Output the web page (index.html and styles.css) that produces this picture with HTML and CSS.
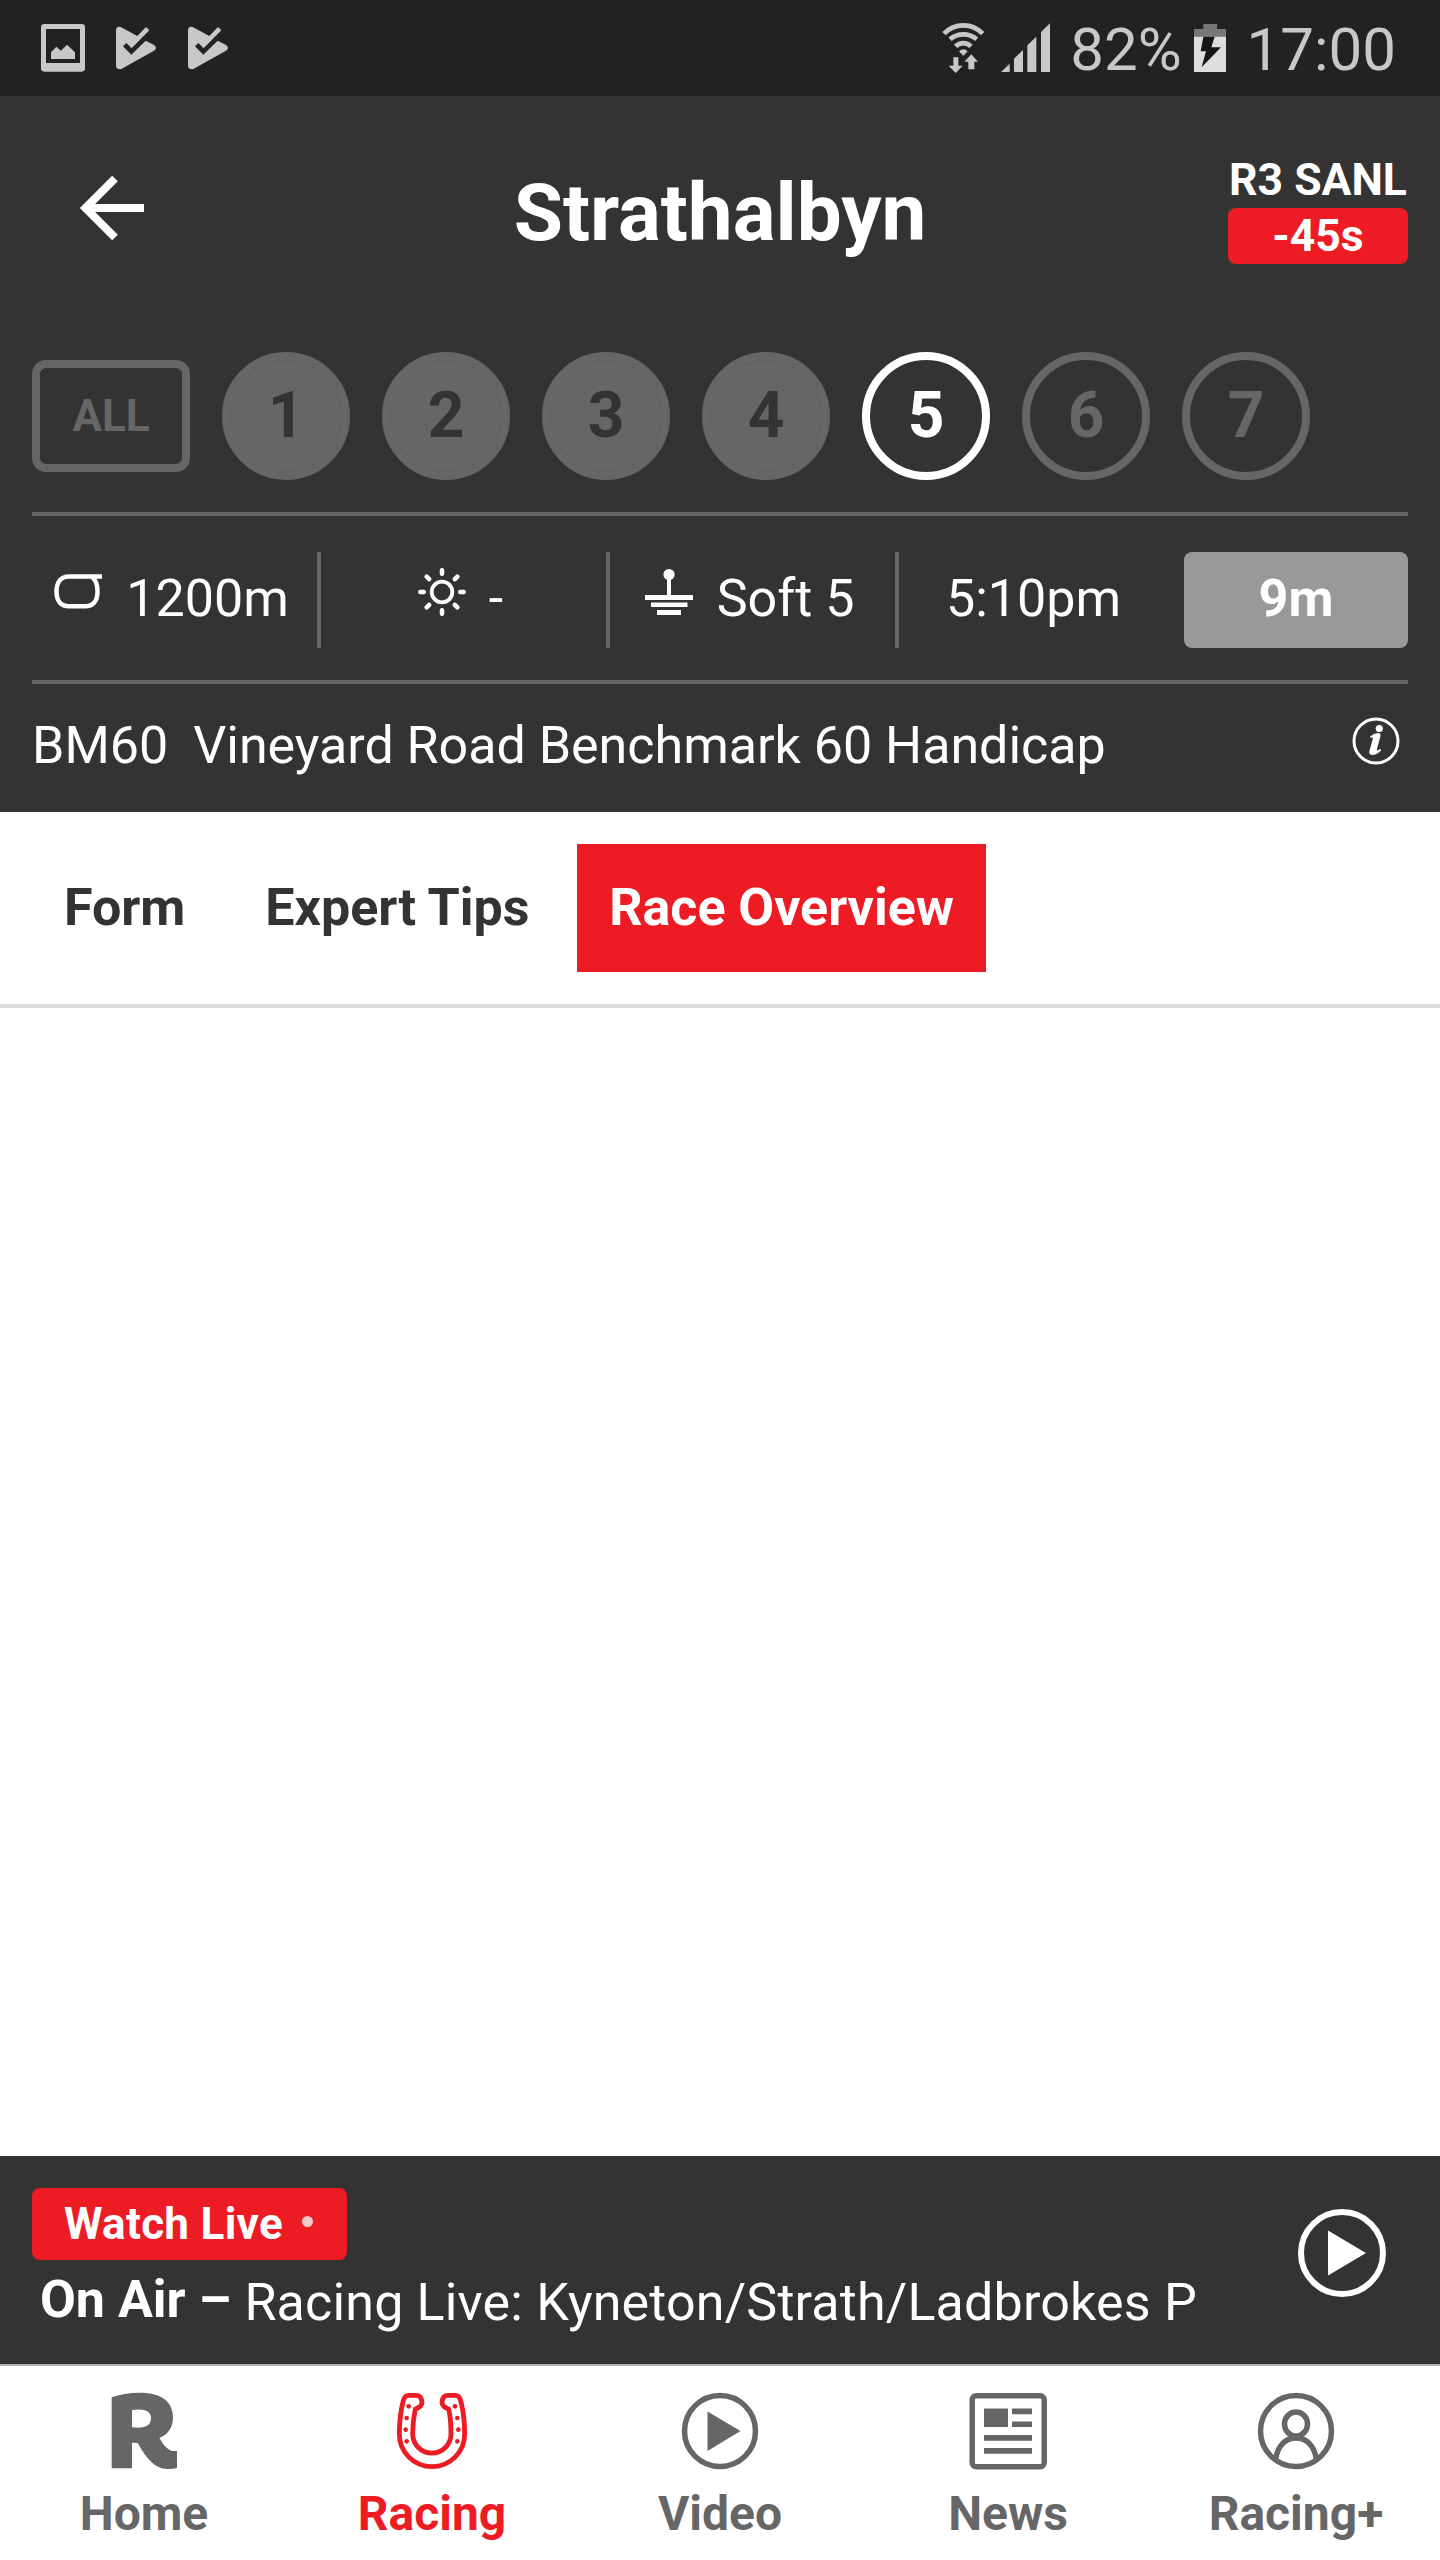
FILE: index.html
```html
<!DOCTYPE html>
<html lang="en">
<head>
<meta charset="utf-8">
<title>Strathalbyn</title>
<link rel="stylesheet" href="styles.css">
</head>
<body>
<div class="screen">
  <div class="status">
    <div class="status-left">
      <svg width="44" height="96" viewBox="123 0 132 288" fill="#c8c8c8"><path fill-rule="evenodd" d="M133 72H245Q255 72 255 82V205Q255 215 245 215H133Q123 215 123 205V82Q123 72 133 72ZM138 87V189H240V87Z"/><path d="M153 157L169 140L183 152L201 134L225 157V177H153Z"/></svg>
      <svg width="40" height="96" viewBox="348 0 120 288" fill="#c8c8c8"><path d="M348 90Q350 77 362 81L412 108L438 81L448 91L395 145L379 129L369 139L394 164L437 122L462 135Q474 144 462 152L364 207Q350 210 348 198Z"/></svg>
      <svg width="40" height="96" viewBox="348 0 120 288" fill="#c8c8c8"><path d="M348 90Q350 77 362 81L412 108L438 81L448 91L395 145L379 129L369 139L394 164L437 122L462 135Q474 144 462 152L364 207Q350 210 348 198Z"/></svg>
    </div>
    <div class="status-right">
      <svg width="112" height="80" viewBox="0 -6 336 240" fill="#c8c8c8">
        <g fill="none" stroke="#c8c8c8" stroke-width="14"><path d="M12 71A79.700 79.700 0 0 1 128 71"/><path d="M30 88A61 61 0 0 1 110 88"/><path d="M47 109A32 32 0 0 1 93 109"/></g>
        <path d="M57 124Q70 112 83 124L70 137ZM40 142h15v25h13l-21 22-21-22h14zM94 133l20 22h-11v23h-18v-23h-12z"/>
        <path d="M183 186L209 161V186ZM222 186V146L249 120V186ZM262 186V106L289 80V186ZM303 186V66L330 40V186Z"/>
      </svg>
      <span class="battery-level">82%</span>
      <svg width="32" height="80" viewBox="762 -6 96 240"><path fill="#777" d="M762 57H790V42H831V57H858V81H762Z"/><path fill="#dedede" d="M762 80H858V186H762Z"/><path fill="#161616" d="M790 80H824L814 112H843L785 172L798 124H782Z"/></svg>
      <span class="clock">17:00</span>
    </div>
  </div>

  <header class="header">
    <div class="title-bar">
      <svg class="back" width="66" height="66" viewBox="0 0 66 66" fill="none" stroke="#fff" stroke-width="8"><path d="M35 3.500L5.500 33L35 62.500M5 33H64"/></svg>
      <h1>Strathalbyn</h1>
      <div class="next-race"><span class="next-name">R3 SANL</span><span class="next-time">-45s</span></div>
    </div>

    <div class="races">
      <span class="all">ALL</span>
      <span class="race past">1</span><span class="race past">2</span><span class="race past">3</span><span class="race past">4</span>
      <span class="race current">5</span><span class="race">6</span><span class="race">7</span>
    </div>

    <div class="conditions">
      <div class="cell distance">
        <svg width="48" height="48" viewBox="0 0 48 48" fill="none" stroke="#fff" stroke-width="4.500"><path d="M48 8.500H15C7 8.500 2.500 14 2.500 23.500S7 38.300 15 38.300H31C39 38.300 43.500 33 43.500 23.500C43.500 17 42 12 38 9"/></svg>
        <span>1200m</span>
      </div>
      <div class="cell weather">
        <svg width="48" height="48" viewBox="0 0 48 48" fill="none" stroke="#fff" stroke-width="4.500" stroke-linecap="round"><circle cx="24" cy="24" r="10.300" stroke-width="3.800"/><path d="M24 2.300V5.800M24 42.200V45.700M2.300 24H5.800M42.200 24H45.700M8.600 8.600L11.200 11.200M36.800 36.800L39.400 39.400M8.600 39.400L11.200 36.800M36.800 11.200L39.400 8.600"/></svg>
        <span>-</span>
      </div>
      <div class="cell ground">
        <svg width="48" height="48" viewBox="0 0 48 48" fill="#fff"><circle cx="24" cy="6.500" r="5.600"/><path d="M22 8H26V27H48V32H0V27H22ZM6 34.500H42.500V39H6ZM12 42H36V47H12Z"/></svg>
        <span>Soft 5</span>
      </div>
      <div class="cell start">5:10pm</div>
      <div class="countdown">9m</div>
    </div>

    <div class="race-name">
      <span class="grade">BM60</span><span>Vineyard Road Benchmark 60 Handicap</span>
      <svg class="info" width="48" height="48" viewBox="0 0 48 48"><circle cx="24" cy="24" r="22" fill="none" stroke="#fff" stroke-width="3"/><circle cx="27.300" cy="11.500" r="3.600" fill="#fff"/><path fill="#fff" d="M18 19.500Q22 16.300 26 16Q29 16 28.500 19L25 32Q24.500 34 26 33.300L28.500 31.800L29 33.500Q24.500 38 20 38Q16.500 37.500 17.500 33.500L20.800 22Q21.300 20 18.500 20.800Z"/></svg>
    </div>
  </header>

  <nav class="tabs">
    <span class="tab">Form</span><span class="tab">Expert Tips</span><span class="tab active">Race Overview</span>
  </nav>

  <main class="content"></main>

  <section class="player">
    <div class="now">
      <span class="watch">Watch Live<i class="dot"></i></span>
      <p class="on-air"><b>On Air –</b><span>Racing Live: Kyneton/Strath/Ladbrokes P</span></p>
    </div>
    <svg width="88" height="88" viewBox="0 0 88 88"><circle cx="44" cy="44" r="41" fill="none" stroke="#fff" stroke-width="6"/><path fill="#fff" d="M30 21.500L68 44L30 66.500Z"/></svg>
  </section>

  <nav class="bottom-nav">
    <div class="item">
      <svg width="76" height="78" viewBox="18 36 228 234" fill="#666"><path fill-rule="evenodd" d="M35 52Q70 38 120 38C185 38 219 65 219 113C219 140 205 163 178 174C194 200 206 216 231 213V264Q215 268 200 267C165 265 142 240 113 189L96 188V265H35ZM96 90V142Q153 149 153 115Q153 82 96 90Z"/></svg>
      <span>Home</span>
    </div>
    <div class="item selected">
      <svg width="76" height="78" viewBox="882 36 228 234" fill="#ed1c24"><path fill="none" stroke="#ed1c24" stroke-width="14.500" stroke-linejoin="round" d="M946 87Q966 80 966 66Q964 46 948 46H926Q914 46 910 62C900 100 898 135 898 162A98 98 0 0 0 1094 162C1094 135 1092 100 1082 62Q1078 46 1066 46H1044Q1028 46 1026 66Q1026 80 1046 87C1053 115 1053 140 1053 162A57.500 57.500 0 0 1 938 162C938 140 940 115 946 87Z"/><circle cx="926" cy="79" r="7"/><circle cx="920" cy="114" r="7"/><circle cx="917" cy="149" r="7"/><circle cx="920" cy="184" r="7"/><circle cx="1065" cy="79" r="7"/><circle cx="1072" cy="114" r="7"/><circle cx="1075" cy="149" r="7"/><circle cx="1072" cy="184" r="7"/></svg>
      <span>Racing</span>
    </div>
    <div class="item">
      <svg width="76" height="78" viewBox="0 0 76 78"><circle cx="38" cy="39" r="35.500" fill="none" stroke="#666" stroke-width="5.500"/><path fill="#666" d="M25.500 19.500L58.500 39L25.500 59Z"/></svg>
      <span>Video</span>
    </div>
    <div class="item">
      <svg width="78" height="78" viewBox="0 0 78 78" fill="#666"><rect x="3.200" y="3.700" width="72" height="71" rx="4" fill="none" stroke="#666" stroke-width="5.500"/><path d="M15 16.500H39V35H15ZM43 16.500H63V22.200H43ZM43 29.500H63V35H43ZM15 43H63V48.800H15ZM15 56H63V61.800H15Z"/></svg>
      <span>News</span>
    </div>
    <div class="item">
      <svg width="76" height="78" viewBox="0 0 76 78" fill="none" stroke="#666" stroke-width="5.500"><circle cx="38" cy="39" r="35.500"/><ellipse cx="38" cy="32" rx="11.500" ry="12"/><path d="M17.500 67C20 54 27 46 38 46S56 54 58.500 67"/></svg>
      <span>Racing+</span>
    </div>
  </nav>
</div>
</body>
</html>
```
FILE: styles.css
```css
* { box-sizing: border-box; }
body { margin: 0; background: #fff; font-family: Roboto, "Liberation Sans", sans-serif; }
svg { display: block; flex: none; overflow: visible; }
.screen { width: 1440px; height: 2560px; display: flex; flex-direction: column; overflow: hidden; white-space: nowrap; }

.status { height: 96px; flex: none; background: #222; color: #c8c8c8; display: flex; justify-content: space-between; align-items: center; padding: 0 44px 0 41px; }
.status-left { display: flex; gap: 32px; }
.status-left svg:first-child { margin-right: -1px; }
.status-right { display: flex; align-items: center; font-size: 60px; line-height: 96px; }
.status-right span { padding-top: 4px; }
.battery-level { margin: 0 12px 0 18px; }
.clock { margin-left: 21px; }

.header { height: 716px; flex: none; background: #333; color: #fff; padding: 0 32px; }
.title-bar { height: 224px; display: grid; grid-template-columns: 1fr auto 1fr; align-items: center; }
.back { margin-left: 48px; }
h1 { margin: 9px 0 0; font-size: 80px; line-height: 96px; font-weight: 700; }
.next-race { justify-self: end; width: 180px; display: flex; flex-direction: column; text-align: center; font-weight: 700; font-size: 44.500px; margin-top: 4px; }
.next-name { line-height: 48px; height: 52px; }
.next-time { line-height: 56px; height: 56px; background: #ed1c24; border-radius: 8px; }

.races { height: 196px; border-bottom: 4px solid #666; padding: 32px 0; display: flex; gap: 32px; align-items: center; font-weight: 700; color: #666; }
.all { width: 158px; height: 112px; border: 8px solid #666; border-radius: 14px; font-size: 44px; line-height: 96px; text-align: center; }
.race { width: 128px; height: 128px; border: 8px solid #666; border-radius: 50%; font-size: 64px; line-height: 112px; text-align: center; }
.past { background: #666; color: #333; box-shadow: inset 0 0 0 1px #606060; }
.current { border-color: #fff; color: #fff; }

.conditions { height: 168px; border-bottom: 4px solid #666; padding: 36px 0 32px; display: flex; font-size: 52px; line-height: 94px; }
.cell { height: 96px; display: flex; justify-content: center; flex: none; width: 289px; padding-right: 6px; border-right: 4px solid #666; }
.cell svg { margin-top: 16px; }
.distance { gap: 24px; }
.weather { gap: 23px; }
.ground { gap: 24px; }
.start { width: 269px; padding: 0; border: 0; }
.countdown { margin-left: auto; width: 224px; height: 96px; background: #999; border-radius: 8px; text-align: center; font-weight: 700; }

.race-name { height: 128px; display: flex; font-size: 52px; line-height: 124px; letter-spacing: -0.020px; }
.grade { margin-right: 25px; }
.info { margin: 33px 8px 0 auto; }

.tabs { height: 196px; flex: none; border-bottom: 4px solid #ddd; padding: 32px; display: flex; gap: 16px; font-size: 52px; font-weight: 700; line-height: 128px; color: #333; }
.tab { padding: 0 32px; letter-spacing: -0.040px; }
.active { background: #ed1c24; color: #fff; }
.content { flex: 1; }

.player { height: 208px; flex: none; background: #333; color: #fff; padding: 32px 54px 0 32px; display: flex; justify-content: space-between; }
.player svg { margin-top: 21px; }
.watch { display: flex; width: 315px; height: 72px; background: #ed1c24; border-radius: 8px; padding: 0 32px; align-items: center; font-size: 44px; line-height: 72px; font-weight: 700; letter-spacing: 0.300px; }
.dot { width: 11px; height: 11px; border-radius: 50%; background: #efc9cd; margin: -5px 0 0 19px; }
.on-air { margin: 0 0 0 8px; display: flex; font-size: 52px; line-height: 80px; }
.on-air span { padding-top: 3px; margin-left: 13px; letter-spacing: 0.170px; }

.bottom-nav { height: 196px; flex: none; border-top: 2px solid #b2b2b2; display: grid; grid-template-columns: repeat(5, 1fr); color: #666; font-size: 48px; font-weight: 700; }
.item { display: flex; flex-direction: column; align-items: center; padding-top: 26px; }
.item span { line-height: 56px; margin-top: 16px; }
.selected { color: #ed1c24; }
```
